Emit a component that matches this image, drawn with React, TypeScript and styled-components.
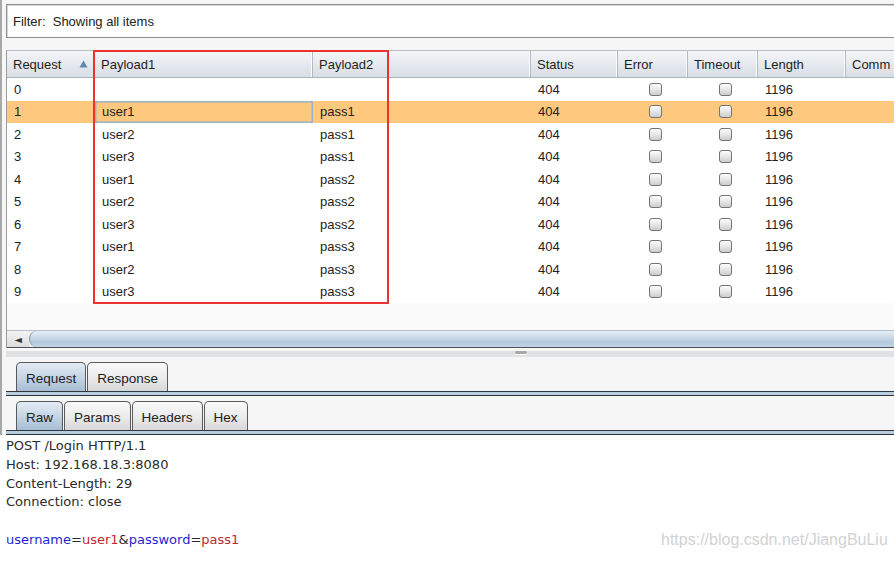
import styled, { createGlobalStyle } from 'styled-components';

interface Result {
    request: number;
    payload1: string;
    payload2: string;
    status: number;
    length: number;
}

const GlobalStyle = createGlobalStyle`
    html, body {
        margin: 0;
        padding: 0;
        background: #ffffff;
    }
    * {
        box-sizing: border-box;
    }
`;

const COLUMNS = '88px 218px 218px 87px 70px 70px 88px 120px';

const users = ['user1', 'user2', 'user3'];
const passes = ['pass1', 'pass2', 'pass3'];

const results: Result[] = [
    { request: 0, payload1: '', payload2: '', status: 404, length: 1196 },
    ...passes.flatMap((p, pi) =>
        users.map((u, ui) => ({
            request: pi * 3 + ui + 1,
            payload1: u,
            payload2: p,
            status: 404,
            length: 1196,
        }))
    ),
];

function SortArrow() {
    return (
        <svg width='9' height='8' viewBox='0 0 9 8'>
            <path d='M4.5 0.5 L8.5 7.5 L0.5 7.5 Z' fill='#5f86ad' />
        </svg>
    );
}

function App() {
    return (
        <Screen>
            <GlobalStyle />
            <Upper>
                <FilterBar>Filter:  Showing all items</FilterBar>

                <TablePanel>
                    <HeaderRow>
                        <HeaderCell>
                            Request
                            <SortSlot>
                                <SortArrow />
                            </SortSlot>
                        </HeaderCell>
                        <HeaderCell>Payload1</HeaderCell>
                        <HeaderCell>Payload2</HeaderCell>
                        <HeaderCell>Status</HeaderCell>
                        <HeaderCell>Error</HeaderCell>
                        <HeaderCell>Timeout</HeaderCell>
                        <HeaderCell>Length</HeaderCell>
                        <HeaderCell>Comm</HeaderCell>
                    </HeaderRow>

                    {results.map((r) => (
                        <Row key={r.request} $selected={r.request === 1}>
                            <Cell>{r.request}</Cell>
                            <Cell $focused={r.request === 1}>{r.payload1}</Cell>
                            <Cell>{r.payload2}</Cell>
                            <Cell>{r.status}</Cell>
                            <Cell $center>
                                <Check />
                            </Cell>
                            <Cell $center>
                                <Check />
                            </Cell>
                            <Cell>{r.length}</Cell>
                            <Cell />
                        </Row>
                    ))}

                    <EmptyArea />

                    <ScrollBar>
                        <ScrollButton>◄</ScrollButton>
                        <ScrollThumb />
                    </ScrollBar>
                </TablePanel>

                <Divider>
                    <Grip />
                </Divider>

                <TabStrip>
                    <Tabs>
                        <Tab $active>Request</Tab>
                        <Tab>Response</Tab>
                    </Tabs>
                    <TabLine />
                </TabStrip>

                <TabStrip>
                    <Tabs>
                        <Tab $active>Raw</Tab>
                        <Tab>Params</Tab>
                        <Tab>Headers</Tab>
                        <Tab>Hex</Tab>
                    </Tabs>
                    <TabLine />
                </TabStrip>
            </Upper>

            <Message>
                <Line>POST /Login HTTP/1.1</Line>
                <Line>Host: 192.168.18.3:8080</Line>
                <Line>Content-Length: 29</Line>
                <Line>Connection: close</Line>
                <Line />
                <Line>
                    <Name>username</Name>=<Value>user1</Value>&amp;
                    <Name>password</Name>=<Value>pass1</Value>
                </Line>
            </Message>

            <Highlight />
            <Watermark>https://blog.csdn.net/JiangBuLiu</Watermark>
        </Screen>
    );
}

export default App;

const Screen = styled.div`
    position: relative;
    width: 894px;
    height: 561px;
    overflow: hidden;
    display: flex;
    flex-direction: column;
    background: #fdfdfd;
    font-family: 'Liberation Sans', Arial, sans-serif;
    font-size: 13px;
    color: #222;
`;

const Upper = styled.div`
    display: flex;
    flex-direction: column;
    padding: 4px 0 0 4px;
    border-left: 2px solid #a8a8a8;
    background: #f6f6f6;
`;

const FilterBar = styled.div`
    width: 900px;
    height: 34px;
    display: flex;
    align-items: center;
    padding-left: 6px;
    white-space: pre;
    background: #ffffff;
    border: 1px solid #8f8f8f;
    box-shadow: inset 1px 1px 0 #d6d6d6;
`;

const TablePanel = styled.div`
    width: 900px;
    height: 298px;
    margin-top: 12px;
    display: flex;
    flex-direction: column;
    border-top: 1px solid #b9bdc2;
    border-left: 1px solid #9a9a9a;
    background: #fafafa;
`;

const HeaderRow = styled.div`
    display: grid;
    grid-template-columns: ${COLUMNS};
    height: 27px;
    background: linear-gradient(#f3f5f8, #e6e9ee 50%, #d8dee5);
    border-bottom: 1px solid #aab1b9;
`;

const HeaderCell = styled.div`
    display: flex;
    align-items: center;
    padding-left: 6px;
    border-right: 1px solid #b4b9c0;
    box-shadow: inset -1px 0 0 #fbfcfd;
    color: #1e1e1e;
    white-space: nowrap;
    overflow: hidden;
`;

const SortSlot = styled.span`
    margin-left: auto;
    margin-right: 6px;
    display: flex;
`;

const Row = styled.div<{ $selected?: boolean }>`
    display: grid;
    grid-template-columns: ${COLUMNS};
    height: 22.5px;
    background: ${(p) => (p.$selected ? '#fec97e' : '#ffffff')};
`;

const Cell = styled.div<{ $center?: boolean; $focused?: boolean }>`
    display: flex;
    align-items: center;
    justify-content: ${(p) => (p.$center ? 'center' : 'flex-start')};
    padding-left: ${(p) => (p.$center ? '4px' : '7px')};
    box-shadow: ${(p) => (p.$focused ? 'inset 0 0 0 1.5px #9ab1c9' : 'none')};
    color: #222;
`;

const Check = styled.span`
    width: 13px;
    height: 13px;
    border: 1px solid #747474;
    border-radius: 3px;
    background: linear-gradient(#fdfdfd, #e6e6e6 50%, #cdcdcd);
    box-shadow: inset 0 1px 0 #ffffff;
`;

const EmptyArea = styled.div`
    flex: 1;
    background: #fafafa;
`;

const ScrollBar = styled.div`
    height: 18px;
    display: flex;
    border-top: 1px solid #b7c0ca;
    border-bottom: 1px solid #48515c;
    background: #e9ecef;
`;

const ScrollButton = styled.div`
    width: 22px;
    display: flex;
    align-items: center;
    justify-content: center;
    font-family: 'DejaVu Sans', sans-serif;
    font-size: 10px;
    color: #333;
    background: linear-gradient(#f4f4f4, #dcdcdc);
`;

const ScrollThumb = styled.div`
    flex: 1;
    border-left: 1px solid #7e90a3;
    border-radius: 9px 0 0 9px;
    background: linear-gradient(#e6eef6, #c7d7e6 45%, #b3c8dc 70%, #c4d4e3);
`;

const Divider = styled.div`
    height: 9px;
    display: flex;
    align-items: flex-start;
    padding: 3px 0 0 509px;
    background: linear-gradient(#f8f8f8 30%, #dedfe1 30%, #e2e3e5);
`;

const Grip = styled.div`
    width: 12px;
    height: 3px;
    border-radius: 2px;
    background: #a8a8a8;
    box-shadow: 0 1px 0 #ffffff;
`;

const TabStrip = styled.div`
    display: flex;
    flex-direction: column;
    padding-top: 5px;
`;

const Tabs = styled.div`
    display: flex;
    padding-left: 10px;
    height: 29px;
`;

const Tab = styled.div<{ $active?: boolean }>`
    display: flex;
    align-items: center;
    padding: 2px 9px 0;
    margin-right: 1px;
    border: 1px solid #5a5a5a;
    border-bottom: none;
    border-radius: 5px 5px 0 0;
    font-size: 13.5px;
    color: #222;
    background: ${(p) =>
        p.$active
            ? 'linear-gradient(#e3ebf3, #c3d3e3 55%, #a7bdd3)'
            : 'linear-gradient(#fafafa, #eaeaea 55%, #d8d8d8)'};
`;

const TabLine = styled.div`
    height: 5px;
    margin-right: -10px;
    border-top: 1px solid #30363e;
    border-bottom: 1px solid #2c323a;
    background: #b9cde1;
`;

const Message = styled.div`
    flex: 1;
    padding: 2px 0 0 6px;
    background: #ffffff;
    font-family: 'DejaVu Sans', sans-serif;
    font-size: 13px;
    color: #2a2a2a;
`;

const Line = styled.div`
    height: 18.75px;
    line-height: 18.75px;
    white-space: pre;
`;

const Name = styled.span`
    color: #1f1fd2;
`;

const Value = styled.span`
    color: #c2262e;
`;

const Highlight = styled.div`
    position: absolute;
    left: 93px;
    top: 50px;
    width: 296px;
    height: 254px;
    border: 2px solid #ec3131;
    pointer-events: none;
`;

const Watermark = styled.div`
    position: absolute;
    left: 661px;
    top: 531px;
    font-family: 'Liberation Sans', Arial, sans-serif;
    font-size: 16px;
    color: #d2d2d2;
`;
